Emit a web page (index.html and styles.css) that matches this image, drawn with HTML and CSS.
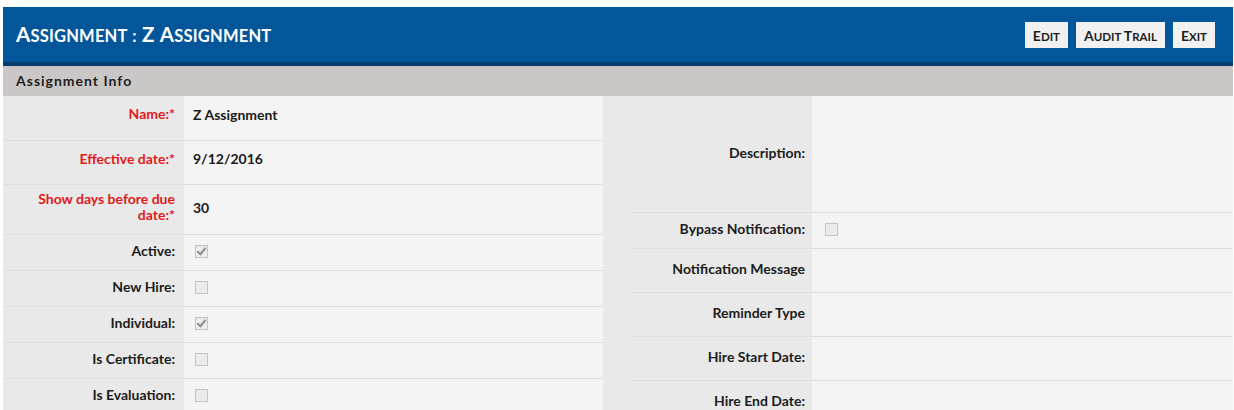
FILE: index.html
```html
<!DOCTYPE html>
<html lang="en">
<head>
    <meta charset="UTF-8">
    <title>Assignment : Z Assignment</title>
    <link rel="stylesheet" href="styles.css">
</head>
<body>
    <div class="page">
        <!-- Title bar -->
        <div class="titlebar">
            <h1><span class="cap">A</span>ssignment : <span class="cap">Z</span> <span class="cap">A</span>ssignment</h1>
            <div class="actions">
                <button><span class="cap">E</span>dit</button>
                <button><span class="cap">A</span>udit <span class="cap">T</span>rail</button>
                <button><span class="cap">E</span>xit</button>
            </div>
        </div>

        <div class="section-head">Assignment Info</div>

        <div class="form">
            <!-- Left column -->
            <div class="col col-left">
                <div class="row h44">
                    <div class="lbl req">Name:*</div>
                    <div class="val">Z Assignment</div>
                </div>
                <div class="row h44">
                    <div class="lbl req">Effective date:*</div>
                    <div class="val">9/12/2016</div>
                </div>
                <div class="row h50">
                    <div class="lbl req">Show days before due date:*</div>
                    <div class="val">30</div>
                </div>
                <div class="row h36">
                    <div class="lbl">Active:</div>
                    <div class="val"><span class="chk checked"></span></div>
                </div>
                <div class="row h36">
                    <div class="lbl">New Hire:</div>
                    <div class="val"><span class="chk"></span></div>
                </div>
                <div class="row h36">
                    <div class="lbl">Individual:</div>
                    <div class="val"><span class="chk checked"></span></div>
                </div>
                <div class="row h36">
                    <div class="lbl">Is Certificate:</div>
                    <div class="val"><span class="chk"></span></div>
                </div>
                <div class="row h36">
                    <div class="lbl">Is Evaluation:</div>
                    <div class="val"><span class="chk"></span></div>
                </div>
            </div>

            <!-- Right column -->
            <div class="col col-right">
                <div class="row h116">
                    <div class="lbl">Description:</div>
                    <div class="val"></div>
                </div>
                <div class="row h36">
                    <div class="lbl">Bypass Notification:</div>
                    <div class="val"><span class="chk"></span></div>
                </div>
                <div class="row h44">
                    <div class="lbl">Notification Message</div>
                    <div class="val"></div>
                </div>
                <div class="row h44">
                    <div class="lbl">Reminder Type</div>
                    <div class="val"></div>
                </div>
                <div class="row h44">
                    <div class="lbl">Hire Start Date:</div>
                    <div class="val"></div>
                </div>
                <div class="row h44">
                    <div class="lbl">Hire End Date:</div>
                    <div class="val"></div>
                </div>
            </div>
        </div>
    </div>
</body>
</html>
```

FILE: styles.css
```css
body {
    margin: 7px 1px 0 3px;
    font-family: Lato, "Open Sans", Arial, sans-serif;
    font-size: 14px;
    color: #1c1c1c;
    background: #fff;
}
.titlebar {
    height: 55px;
    background: #03569a;
    border-bottom: 4px solid #063d6b;
    display: flex;
    align-items: center;
    justify-content: space-between;
    padding: 0 18px 0 13px;
}
.titlebar h1 {
    margin: 0;
    color: #fff;
    font-size: 16.5px;
    font-weight: 700;
    text-transform: uppercase;
    letter-spacing: 0.2px;
    word-spacing: 1px;
    padding-bottom: 2px;
}
.titlebar h1 .cap {
    font-size: 20.5px;
}
.actions {
    display: flex;
    gap: 8px;
    padding-top: 1px;
}
.actions button {
    height: 26px;
    padding: 0 8px;
    border: none;
    border-radius: 0;
    background: #f1f1f1;
    color: #1c1c1c;
    font-family: Lato, Arial, sans-serif;
    font-size: 11.5px;
    font-weight: 700;
    text-transform: uppercase;
    cursor: pointer;
}
.actions button .cap {
    font-size: 14px;
}
.section-head {
    height: 30px;
    line-height: 29px;
    background: #cbc7c6;
    padding-left: 13px;
    font-weight: 700;
    letter-spacing: 1px;
    color: #1e1e1e;
}
.form {
    display: grid;
    grid-template-columns: 600px 1fr;
    height: 320px;
    overflow: hidden;
}
.col-left {
    background: #f4f4f4;
}
.col-right {
    background: #e9e9e9;
    padding-left: 29px;
}
.row {
    display: grid;
    grid-template-columns: 181px 1fr;
    border-top: 1px solid #dedede;
}
.col-right .row {
    grid-template-columns: 180px 1fr;
}
.row:first-child {
    border-top: none;
}
.h36 { height: 35px; }
.h44 { height: 43px; }
.h50 { height: 49px; }
.h116 { height: 116px; }
.row.h44:first-child { height: 44px; }
.lbl,
.val {
    display: flex;
    align-items: center;
    padding-bottom: 3px;
}
.col-left .h44 .lbl,
.col-left .h44 .val {
    padding-bottom: 8px;
}
.col-left .h50 .lbl,
.col-left .h50 .val {
    padding-bottom: 5px;
}
.lbl {
    background: #e9e9e9;
    justify-content: flex-end;
    text-align: right;
    padding-left: 12px;
    padding-right: 9px;
    font-weight: 700;
    line-height: 16px;
}
.col-right .lbl {
    padding-right: 7px;
}
.lbl.req {
    color: #e3191b;
}
.val {
    background: #f4f4f4;
    padding-left: 9px;
    font-weight: 700;
    color: #1a1a1a;
}
.col-right .val {
    padding-left: 11px;
}
.chk {
    display: inline-block;
    width: 11px;
    height: 11px;
    margin-left: 2px;
    border: 1px solid #c4c4c4;
    background: #ebebeb;
    position: relative;
}
.chk.checked::after {
    content: "";
    position: absolute;
    left: 3px;
    top: 0px;
    width: 3px;
    height: 7px;
    border: solid #8c8c8c;
    border-width: 0 2px 2px 0;
    transform: rotate(40deg);
}
```
